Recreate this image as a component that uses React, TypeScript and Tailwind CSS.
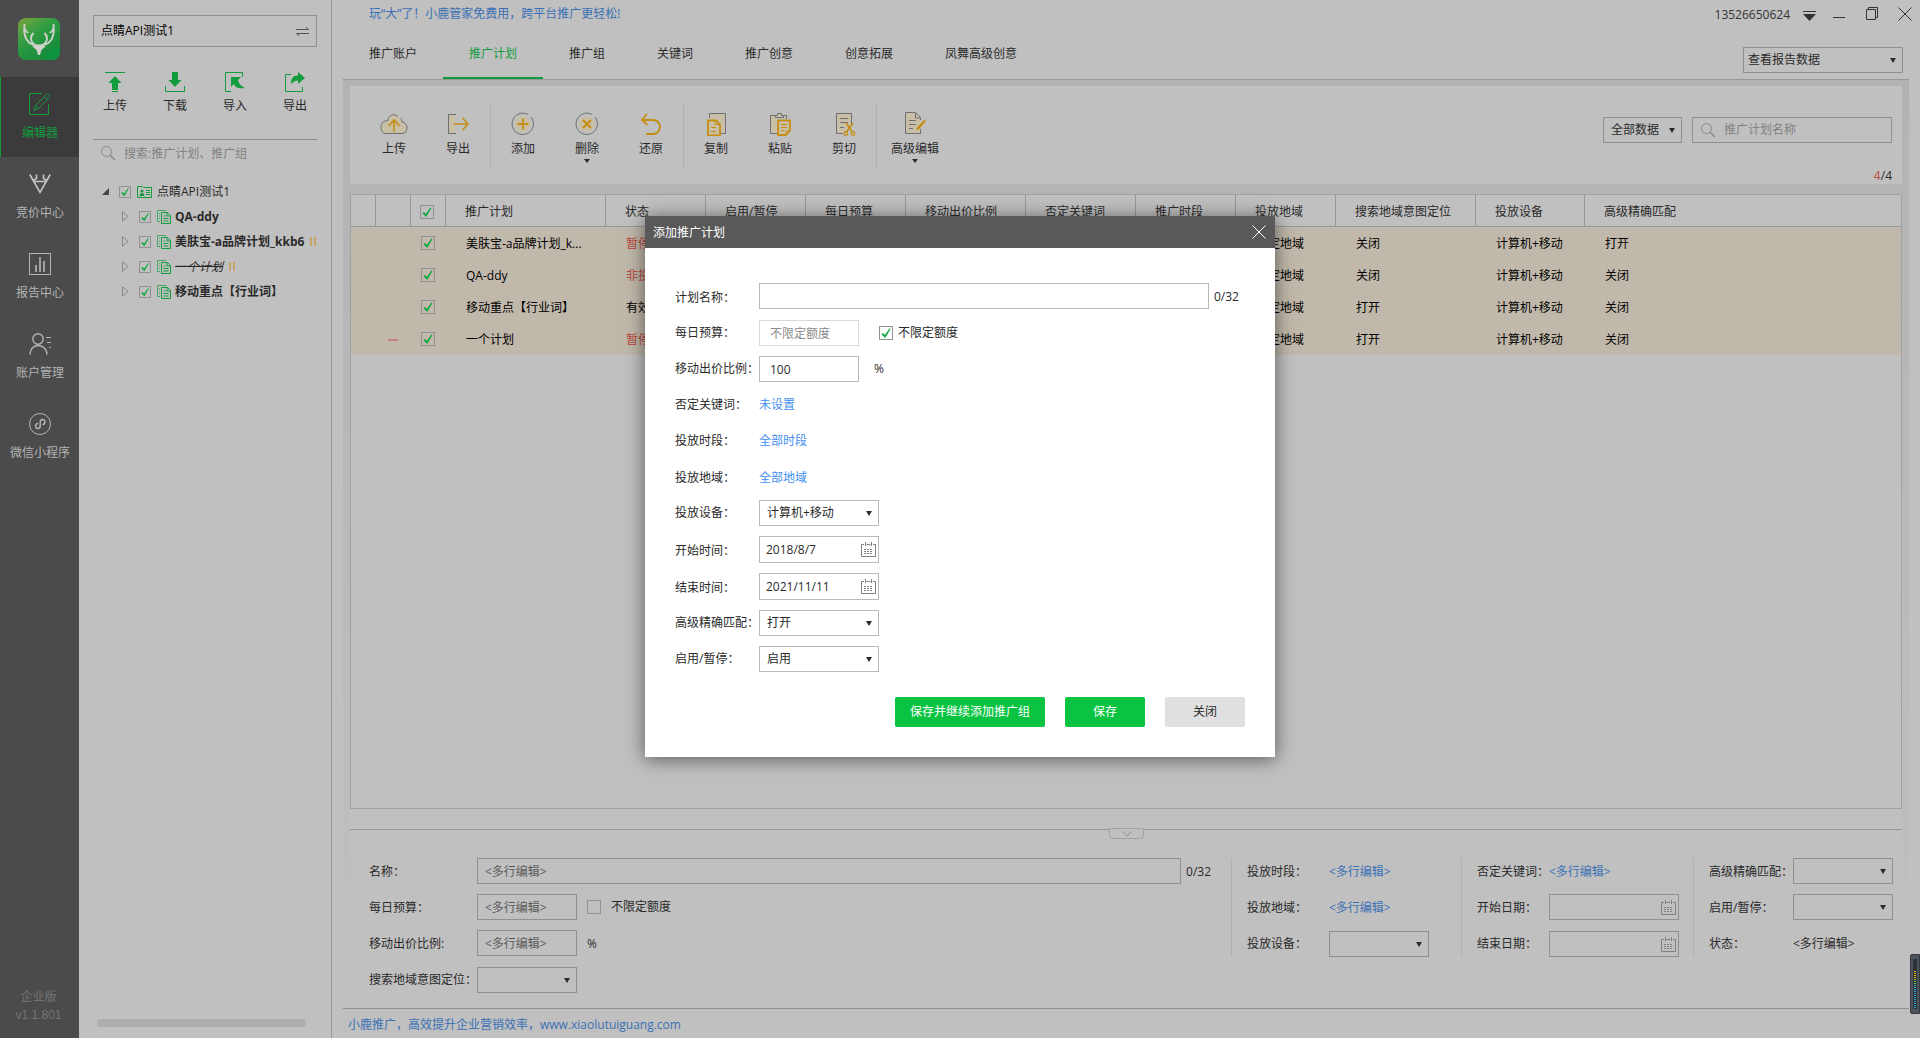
import { useState } from "react";
import type { ReactNode } from "react";

type Campaign = {
  name: string;
  status: string;
  paused?: boolean;
  removed?: boolean;
  geo: string;
  match: string;
};

const campaigns: Campaign[] = [
  { name: "美肤宝-a品牌计划_k...", status: "暂停", paused: true, geo: "关闭", match: "打开" },
  { name: "QA-ddy", status: "非投放", paused: true, geo: "关闭", match: "关闭" },
  { name: "移动重点【行业词】", status: "有效", geo: "打开", match: "关闭" },
  { name: "一个计划", status: "暂停", paused: true, removed: true, geo: "打开", match: "关闭" },
];

const tabs = ["推广账户", "推广计划", "推广组", "关键词", "推广创意", "创意拓展", "凤舞高级创意"];

const headers = [
  "推广计划",
  "状态",
  "启用/暂停",
  "每日预算",
  "移动出价比例",
  "否定关键词",
  "推广时段",
  "投放地域",
  "搜索地域意图定位",
  "投放设备",
  "高级精确匹配",
];

const MULTI = "<多行编辑>";

/* ---------- icons ---------- */

function Svg({ w, h, className, children }: { w: number; h: number; className?: string; children: ReactNode }) {
  return (
    <svg
      width={w}
      height={h}
      viewBox={`0 0 ${w} ${h}`}
      fill="none"
      stroke="currentColor"
      className={className}
      aria-hidden="true"
    >
      {children}
    </svg>
  );
}

function Logo() {
  return (
    <Svg w={42} h={42} className="text-[#d2d2cc]">
      <defs>
        <linearGradient id="logo" x1="0" y1="0" x2="0.7" y2="1">
          <stop offset="0" stopColor="#7aa53c" />
          <stop offset="0.45" stopColor="#2f9c43" />
          <stop offset="1" stopColor="#12893a" />
        </linearGradient>
      </defs>
      <rect width="42" height="42" rx="8" fill="url(#logo)" stroke="none" />
      <path d="M42 28C34 30 28 36 26 42h8a8 8 0 0 0 8-8z" fill="#0f9440" stroke="none" />
      <path d="M6.500 6c-1 8 0 15 5 19 3 2 6 2.500 9.500 2.500s6.500-.5 9.500-2.500c5-4 6-11 5-19" strokeWidth="1.800" />
      <path d="M10.500 14.500c-2 0-3-1.500-3.500-4M31.500 14.500c2 0 3-1.500 3.500-4" strokeWidth="1.500" />
      <path d="M15.500 15c-4 4-3 9 1 11M26.500 15c4 4 3 9-1 11" strokeWidth="1.800" />
      <path d="M14 28h14l-4.500 4-1.500 5h-2l-1.500-5z" fill="currentColor" stroke="none" />
    </Svg>
  );
}

function EditIcon() {
  return (
    <Svg w={22} h={22}>
      <path d="M13 .5H.5v21h19V11" />
      <path d="M5 17.500l1.500-5L17.500 1.500c1-1 2-.8 2.800 0s1 1.800 0 2.800L9.500 15.500z M15.500 3.500l3 3 M6.500 12.500l3 3" />
    </Svg>
  );
}

function BidIcon() {
  return (
    <Svg w={22} h={22} className="text-[#c4c4c4]">
      <path d="M.8 1.500l10.200 18L21.200 1.500M5 8.500h12M7.500 1.500v4l-3.500 2M14.500 1.500v4l3.500 2" strokeWidth="1.600" />
    </Svg>
  );
}

function ReportIcon() {
  return (
    <Svg w={22} h={22}>
      <path d="M.5.5h21v21H.5z" />
      <path d="M7 12v7M11 4v15M15 8v11" strokeWidth="1.600" />
    </Svg>
  );
}

function AccountIcon() {
  return (
    <Svg w={22} h={22}>
      <circle cx="9" cy="6" r="5.200" strokeWidth="1.400" />
      <path d="M1 21.500c0-6 4-9 8-9s9 3 9 9" strokeWidth="1.400" />
      <path d="M17 4.500h5M18 9.500h4M20 14.500h2" />
    </Svg>
  );
}

function MiniAppIcon() {
  return (
    <Svg w={22} h={22}>
      <circle cx="11" cy="11" r="10.500" />
      <path
        d="M8.500 10.500c-2.500.5-2.500 5 .3 5 1.500 0 2.400-1 2.400-2.500V9c0-1.500 1-2.500 2.500-2.500 2.800 0 3 4.200.3 5"
        strokeWidth="1.500"
        strokeLinecap="round"
      />
    </Svg>
  );
}

const treeActions = [
  {
    label: "上传",
    icon: (
      <Svg w={20} h={20}>
        <path d="M0 .5h20M7 19.500h6" />
        <path d="M10 4l6.500 7H13v7H7v-7H3.500z" fill="currentColor" stroke="none" />
      </Svg>
    ),
  },
  {
    label: "下载",
    icon: (
      <Svg w={20} h={20}>
        <path d="M.5 14v5.500h19V14" />
        <path d="M10 15L3.500 8H7V0h6v8h3.500z" fill="currentColor" stroke="none" />
      </Svg>
    ),
  },
  {
    label: "导入",
    icon: (
      <Svg w={20} h={20}>
        <path d="M17.500 5V.5H.5v19H6" />
        <path d="M6 5h10l-3 3c1 4 3 6 7 8-7 1-10-1-11-4l-3 3z" fill="currentColor" stroke="none" />
      </Svg>
    ),
  },
  {
    label: "导出",
    icon: (
      <Svg w={20} h={20}>
        <path d="M6 2.500H.5v17h17V15" />
        <path d="M13 0l7 6-7 6V8.500c-3 0-5 1-7 4 0-6 2-9 7-9z" fill="currentColor" stroke="none" />
      </Svg>
    ),
  },
];

const GOLD = "#c48e12";
const CREAM = "#c8bfa6";

const uploadIcon = (
  <Svg w={28} h={24}>
    <path
      d="M18 4.500C13 .5 8 4 8 8.500 4 8.500 1 11 1 15s2 6.500 5 6.500h16c3 0 5-2 5-5.500 0-3.500-2-5.500-5-6 0-2-.5-3-1.500-4"
      fill={CREAM}
    />
    <path d="M14 20V8M8.500 14L14 8l5.500 6" stroke={GOLD} strokeWidth="1.600" />
  </Svg>
);
const exportIcon = (
  <Svg w={24} h={24}>
    <path d="M3 3h6v18H3z" fill={CREAM} stroke="none" />
    <path d="M10 2.500H2.500v19H10" />
    <path d="M8 12h14M16.500 6l5.500 6-5.500 6" stroke={GOLD} strokeWidth="1.600" />
  </Svg>
);
const addIcon = (
  <Svg w={24} h={24}>
    <circle cx="12" cy="12" r="8" fill={CREAM} stroke="none" />
    <path d="M20 5a10.700 10.700 0 1 1-3-2.500" />
    <path d="M12 6.500v11M6.500 12h11" stroke={GOLD} strokeWidth="1.800" />
  </Svg>
);
const deleteIcon = (
  <Svg w={24} h={24}>
    <circle cx="12" cy="12" r="8" fill={CREAM} stroke="none" />
    <path d="M20 5a10.700 10.700 0 1 1-3-2.500" />
    <path d="M8 8l8 8M16 8l-8 8" stroke={GOLD} strokeWidth="2.200" />
  </Svg>
);
const undoIcon = (
  <Svg w={24} h={24}>
    <path d="M8 2L3 8l5.500 5M3 8h11c4 0 7 3 7 7s-3 7-7 7H7" stroke={GOLD} strokeWidth="1.800" />
  </Svg>
);
const copyIcon = (
  <Svg w={24} h={24}>
    <path d="M5.500 6V1.500h16v20H16" fill={CREAM} />
    <path d="M4 8.500h8l4 4v11H4z" fill={CREAM} stroke={GOLD} strokeWidth="1.800" />
    <path d="M11 8.500v4h4M7 15.500h5M7 19.500h5" stroke={GOLD} />
  </Svg>
);
const pasteIcon = (
  <Svg w={24} h={24}>
    <path d="M8 3.500H2.500v18H9M14 3.500h4.500V7M7.500 5.500V3.500h2v-2h4v2h2v2z" fill={CREAM} />
    <path d="M10 8.500h12v10l-4 4.500h-8z" fill={CREAM} stroke={GOLD} strokeWidth="1.800" />
    <path d="M13 12.500h6M13 15.500h6M13 18.500h3M18 23v-4h4" stroke={GOLD} />
  </Svg>
);
const cutIcon = (
  <Svg w={24} h={24}>
    <path d="M11 21.500H4.500v-20h15V12" fill={CREAM} />
    <path d="M8 6.500h8M8 10.500h8M8 15.500h4" />
    <path d="M14 11l6.500 9M21 11l-6.500 9" stroke={GOLD} strokeWidth="1.600" />
    <circle cx="14" cy="21.500" r="1.800" stroke={GOLD} strokeWidth="1.300" />
    <circle cx="21" cy="21.500" r="1.800" stroke={GOLD} strokeWidth="1.300" />
  </Svg>
);
const advancedIcon = (
  <Svg w={24} h={24}>
    <path d="M17.500 17v4.500H2.500v-21h10l5 5V8" fill={CREAM} />
    <path d="M12.500 1v5h5M6 8.500h7M6 12.500h7M6 16.500h4" />
    <path d="M14 17.500l8-9" stroke={GOLD} strokeWidth="2.500" />
  </Svg>
);

const toolGroups = [
  [
    { label: "上传", icon: uploadIcon },
    { label: "导出", icon: exportIcon },
  ],
  [
    { label: "添加", icon: addIcon },
    { label: "删除", icon: deleteIcon, menu: true },
    { label: "还原", icon: undoIcon },
  ],
  [
    { label: "复制", icon: copyIcon },
    { label: "粘贴", icon: pasteIcon },
    { label: "剪切", icon: cutIcon },
  ],
  [{ label: "高级编辑", icon: advancedIcon, menu: true }],
];

function SearchIcon() {
  return (
    <Svg w={15} h={15} className="shrink-0 text-[#8a8a8a]">
      <circle cx="5.500" cy="5.500" r="5" />
      <path d="M9 9l5 5" strokeWidth="1.500" />
    </Svg>
  );
}

function CalendarIcon() {
  return (
    <Svg w={15} h={15} className="text-[#808080]">
      <path d="M3 2.500H.5v12h14v-12H12M5.500 2.500h4M4.500 0v4M10.500 0v4" />
      <path d="M3 7.500h9M3 9.500h9M3 11.500h9" strokeDasharray="2 1" />
    </Svg>
  );
}

function CloseIcon() {
  return (
    <Svg w={14} h={14}>
      <path d="M.5.5l13 13M13.500.5l-13 13" />
    </Svg>
  );
}

function CampaignIcon() {
  return (
    <Svg w={14} h={14} className="shrink-0 text-[#129c3e]">
      <path d="M9 .5H.5v11H3" opacity=".7" />
      <path d="M2 3.500h1M2 6h1M2 8.500h1" opacity=".7" />
      <path d="M4.500 2.500h6l3 3v8h-9zM10 2.500V6h3M6.500 6h2M6.500 8.500h5M6.500 11h5" />
    </Svg>
  );
}

function AccountTreeIcon() {
  return (
    <Svg w={15} h={12} className="shrink-0 text-[#129c3e]">
      <path d="M.5 11.500V.5h5l1 1h8v10z" />
      <circle cx="5" cy="5" r="1.500" fill="currentColor" stroke="none" />
      <path d="M2.500 10c0-4 5-4 5 0z" fill="currentColor" stroke="none" />
      <path d="M9 4.500h4M9 6.500h4M9 8.500h4" />
    </Svg>
  );
}

function PauseIcon() {
  return (
    <Svg w={6} h={9} className="shrink-0 text-[#c89b50]">
      <path d="M1 0v9M5 0v9" strokeWidth="1.500" />
    </Svg>
  );
}

/* ---------- form controls ---------- */

function Check({ id, label, on = true, size = "size-[14px]" }: { id?: string; label?: string; on?: boolean; size?: string }) {
  return (
    <span className={`relative inline-flex shrink-0 ${size}`}>
      <input
        id={id}
        type="checkbox"
        aria-label={label}
        defaultChecked={on}
        className="peer size-full appearance-none border border-[#929292]"
      />
      <svg
        viewBox="0 0 14 14"
        fill="none"
        aria-hidden="true"
        className="pointer-events-none absolute inset-0 hidden peer-checked:block"
      >
        <path d="M2.500 8.200L4 7l1.800 2L10.500 2.500l1 .5-5.300 9z" fill="#0aa83c" />
      </svg>
    </span>
  );
}

function Select({
  id,
  label,
  options,
  className,
  pad = "pl-[7px]",
}: {
  id?: string;
  label?: string;
  options: string[];
  className: string;
  pad?: string;
}) {
  return (
    <span className={`relative inline-flex h-[26px] ${className}`}>
      <select id={id} aria-label={label} className={`size-full appearance-none border border-inherit bg-transparent ${pad}`}>
        {options.map((o) => (
          <option key={o}>{o}</option>
        ))}
      </select>
      <svg width="6" height="5" aria-hidden="true" className="pointer-events-none absolute right-[7px] top-[11px]">
        <path d="M0 0h6L3 5z" fill="#2a2a2a" />
      </svg>
    </span>
  );
}

function DateInput({ id, value, className }: { id: string; value: string; className: string }) {
  return (
    <span className={`relative inline-flex ${className}`}>
      <input id={id} type="text" defaultValue={value} className="size-full border border-inherit bg-transparent pl-[6px]" />
      <button type="button" aria-label="选择日期" className="absolute right-[3px] top-[6px]">
        <CalendarIcon />
      </button>
    </span>
  );
}

/* ---------- layout parts ---------- */

function Sidebar() {
  const items = [
    { label: "编辑器", icon: <EditIcon />, active: true },
    { label: "竞价中心", icon: <BidIcon /> },
    { label: "报告中心", icon: <ReportIcon /> },
    { label: "账户管理", icon: <AccountIcon /> },
    { label: "微信小程序", icon: <MiniAppIcon /> },
  ];
  return (
    <nav className="flex w-[79px] shrink-0 flex-col bg-[#4b4b4b] text-[#b4b4b4]">
      <div className="flex h-[77px] items-center justify-center pr-px">
        <Logo />
      </div>
      {items.map((item) => (
        <button
          key={item.label}
          type="button"
          className={`flex h-20 flex-col items-center gap-[9px] border-l pt-4 ${
            item.active ? "border-[#129c3e] bg-[#3b3b3b] text-[#129c3e]" : "border-transparent"
          }`}
        >
          {item.icon}
          <span>{item.label}</span>
        </button>
      ))}
      <div className="mt-auto pb-[14px] pr-[2px] text-center text-[#757575]">
        <p>企业版</p>
        <p className="font-['Liberation_Sans']">v1.1.801</p>
      </div>
    </nav>
  );
}

function TreePanel() {
  const nodes = [
    { name: "QA-ddy" },
    { name: "美肤宝-a品牌计划_kkb6", paused: true },
    { name: "一个计划", paused: true, removed: true },
    { name: "移动重点【行业词】" },
  ];
  return (
    <aside className="flex w-[253px] shrink-0 flex-col border-r border-[#989898] pl-[14px] pr-[14px]">
      <button type="button" className="mt-[15px] flex h-8 items-center justify-between border border-[#909090] px-[7px] text-black">
        点睛API测试1
        <Svg w={13} h={9} className="text-[#555]">
          <path d="M0 2.500h12.500L9.500 0M13 6.500H.5l3 2.500" />
        </Svg>
      </button>
      <div className="-mx-2 mt-[25px] grid grid-cols-4">
        {treeActions.map((a) => (
          <button key={a.label} type="button" className="flex flex-col items-center gap-[5px] text-[#129c3e]">
            {a.icon}
            <span className="text-[#2a2a2a]">{a.label}</span>
          </button>
        ))}
      </div>
      <div className="mt-6 flex h-[28px] items-center gap-2 border-t border-[#909090] pl-2">
        <SearchIcon />
        <input
          type="text"
          aria-label="搜索"
          placeholder="搜索:推广计划、推广组"
          className="min-w-0 flex-1 bg-transparent placeholder:text-[#828282]"
        />
      </div>
      <ul className="mt-3 flex-1 overflow-hidden">
        <li className="flex h-[25px] items-center pl-[9px]">
          <svg width="7" height="7" aria-hidden="true">
            <path d="M7 0v7H0z" fill="#444" />
          </svg>
          <span className="ml-[10px] flex items-center gap-[6px]">
            <Check label="点睛API测试1" size="size-3" />
            <AccountTreeIcon />
            <span className="-ml-px text-[#2a2a2a]">点睛API测试1</span>
          </span>
        </li>
        {nodes.map((n) => (
          <li key={n.name} className="flex h-[25px] items-center pl-[29px]">
            <Svg w={7} h={11} className="shrink-0 text-[#888]">
              <path d="M.5.8v9.400l5.500-4.700z" />
            </Svg>
            <span className="ml-[10px] flex items-center gap-[6px]">
              <Check label={n.name} size="size-3" />
              <CampaignIcon />
              <span
                className={`-ml-[2px] whitespace-nowrap text-[#2a2a2a] ${n.removed ? "italic line-through" : "font-bold"}`}
              >
                {n.name}
              </span>
              {n.paused && <PauseIcon />}
            </span>
          </li>
        ))}
      </ul>
      <div className="mx-1 mb-[11px] h-2 w-[209px] rounded-full bg-[#aeaeae]" />
    </aside>
  );
}

function TopBar() {
  return (
    <header className="flex h-[27px] items-center justify-between pl-[37px] pr-2">
      <a href="#promo" className="text-[#3a70b5]">
        玩“大”了！小鹿管家免费用，跨平台推广更轻松!
      </a>
      <div className="flex items-center text-[#333]">
        <span className="pt-[2px]">13526650624</span>
        <button type="button" aria-label="菜单" className="ml-[13px] pt-1">
          <Svg w={13} h={10}>
            <path d="M0 .5h13" />
            <path d="M0 3h13l-6.500 7z" fill="currentColor" stroke="none" />
          </Svg>
        </button>
        <button type="button" aria-label="最小化" className="ml-[17px] pt-1">
          <Svg w={12} h={10}>
            <path d="M0 6.500h12" />
          </Svg>
        </button>
        <button type="button" aria-label="还原窗口" className="ml-[21px]">
          <Svg w={12} h={13}>
            <path d="M.5 2.500h9v10h-9zM2.500 2V.5h9v10H10" />
          </Svg>
        </button>
        <button type="button" aria-label="关闭窗口" className="ml-5">
          <CloseIcon />
        </button>
      </div>
    </header>
  );
}

function Tabs() {
  const [active, setActive] = useState("推广计划");
  return (
    <div className="mx-[11px] flex h-[53px] justify-between border-b border-[#989898]">
      <div className="flex" role="tablist">
        {tabs.map((t) => (
          <button
            key={t}
            type="button"
            role="tab"
            aria-selected={t === active}
            onClick={() => setActive(t)}
            className={`border-b-2 px-[26px] pt-1 ${
              t === active ? "border-[#129c3e] text-[#129c3e]" : "border-transparent text-[#2a2a2a]"
            }`}
          >
            {t}
          </button>
        ))}
      </div>
      <div className="mr-[6px] flex items-end pb-[6px]">
        <Select label="查看报告数据" options={["查看报告数据"]} className="w-40 border-[#909090]" pad="pl-1" />
      </div>
    </div>
  );
}

function Toolbar() {
  return (
    <div className="flex h-[98px] justify-between bg-[#c0c0c0] pl-3 pr-[10px]">
      <div className="flex text-[#6d7072]">
        {toolGroups.map((group, i) => (
          <div key={i} className="flex">
            {i > 0 && <div className="mt-[17px] h-16 w-px bg-[#b0b0b0]" />}
            {group.map((t) => (
              <button
                key={t.label}
                type="button"
                className={`flex flex-col items-center pt-[26px] ${t.label.length > 2 ? "w-[76px]" : "w-16"}`}
              >
                {t.icon}
                <span className="mt-1 text-[#2a2a2a]">{t.label}</span>
                {"menu" in t && (
                  <svg width="6" height="4" aria-hidden="true" className="mt-px">
                    <path d="M0 0h6L3 4z" fill="#2a2a2a" />
                  </svg>
                )}
              </button>
            ))}
          </div>
        ))}
      </div>
      <div className="flex flex-col items-end justify-between pt-[31px]">
        <div className="flex gap-[10px]">
          <Select label="数据范围" options={["全部数据"]} className="w-[79px] border-[#909090]" />
          <div className="flex h-[26px] w-[200px] items-center gap-2 border border-[#909090] pl-2">
            <SearchIcon />
            <input
              type="text"
              aria-label="推广计划名称"
              placeholder="推广计划名称"
              className="min-w-0 flex-1 bg-transparent placeholder:text-[#828282]"
            />
          </div>
        </div>
        <p className="leading-4">
          <span className="text-[#bb4a3e]">4</span>/4
        </p>
      </div>
    </div>
  );
}

function CampaignTable() {
  return (
    <div className="mt-[10px] flex-1 border border-[#a2a2a2] bg-[#c0c0c0]">
      <table className="w-full table-fixed border-separate border-spacing-0 text-left">
        <colgroup>
          <col className="w-[25px]" />
          <col className="w-[35px]" />
          <col className="w-[35px]" />
          <col className="w-40" />
          <col className="w-[100px]" />
          <col className="w-[100px]" />
          <col className="w-[100px]" />
          <col className="w-[120px]" />
          <col className="w-[110px]" />
          <col className="w-[100px]" />
          <col className="w-[100px]" />
          <col className="w-[140px]" />
          <col className="w-[109px]" />
          <col />
        </colgroup>
        <thead>
          <tr className="h-8 text-[#2a2a2a] *:border-b *:border-[#989898] *:pt-[2px]">
            <th className="border-r" />
            <th className="border-r" />
            <th className="border-r">
              <span className="flex justify-center pr-[3px]">
                <Check label="全选" />
              </span>
            </th>
            {headers.map((h) => (
              <th key={h} className="border-r pl-[19px] font-normal whitespace-nowrap last:border-r-0">
                {h}
              </th>
            ))}
          </tr>
        </thead>
        <tbody>
          {campaigns.map((c) => (
            <tr key={c.name} className="h-8 bg-[#c0b8aa] whitespace-nowrap text-black *:pl-5 *:pt-[2px]">
              <td className="!pl-0" />
              <td className="!pl-3">{c.removed && <div className="h-[2px] w-[10px] bg-[#c67f7b]" />}</td>
              <td className="!pl-0 !pt-0">
                <span className="flex justify-center pr-px">
                  <Check label={c.name} />
                </span>
              </td>
              <td>{c.name}</td>
              <td className={c.paused ? "text-[#bb4a3e]" : ""}>{c.status}</td>
              <td />
              <td />
              <td />
              <td />
              <td />
              <td>指定地域</td>
              <td>{c.geo}</td>
              <td>计算机+移动</td>
              <td>{c.match}</td>
            </tr>
          ))}
        </tbody>
      </table>
    </div>
  );
}

function BatchEditor() {
  const box = "border border-[#909090] bg-transparent px-[7px] h-[26px] placeholder:text-[#5a5a5a]";
  const text = "pt-[2px]";
  return (
    <section className="flex h-[199px] flex-col bg-[#c0c0c0] pt-5">
      <div className="flex h-[29px] items-start border-t border-[#989898]">
        <button
          type="button"
          aria-label="收起"
          className="ml-[759px] -mt-[2px] flex h-[11px] w-[35px] items-center justify-center rounded-b-sm border border-[#a2a2a2] bg-[#c0c0c0] text-[#909090]"
        >
          <Svg w={12} h={6}>
            <path d="M1.500.5L6 5l4.500-4.500" />
          </Svg>
        </button>
      </div>
      <div className="flex pl-[19px] pr-[9px]">
        <div className="grid min-w-0 flex-1 auto-rows-[26px] grid-cols-[108px_1fr] items-center gap-y-[10px]">
          <label htmlFor="b-name" className={text}>名称：</label>
          <div className="flex items-center gap-[5px] pr-5">
            <input id="b-name" placeholder={MULTI} className={`min-w-0 flex-1 ${box}`} />
            <span className={text}>0/32</span>
          </div>
          <label htmlFor="b-budget" className={text}>每日预算：</label>
          <div className="flex items-center gap-[10px]">
            <input id="b-budget" placeholder={MULTI} className={`w-[100px] ${box}`} />
            <Check id="b-unlimited" on={false} />
            <label htmlFor="b-unlimited">不限定额度</label>
          </div>
          <label htmlFor="b-ratio" className={text}>移动出价比例:</label>
          <div className="flex items-center gap-[10px]">
            <input id="b-ratio" placeholder={MULTI} className={`w-[100px] ${box}`} />
            <span className={text}>%</span>
          </div>
          <label htmlFor="b-geo" className={text}>搜索地域意图定位：</label>
          <Select id="b-geo" options={[""]} className="mt-px w-[100px] border-[#909090]" />
        </div>
        <div className="grid h-[98px] w-[230px] auto-rows-[26px] grid-cols-[82px_1fr] items-center gap-y-[10px] border-l border-[#b0b0b0] pl-[15px]">
          <span className={text}>投放时段：</span>
          <a href="#time" className="pt-[2px] text-[#3a70b5]">{MULTI}</a>
          <span className={text}>投放地域：</span>
          <a href="#region" className="pt-[2px] text-[#3a70b5]">{MULTI}</a>
          <label htmlFor="b-device" className={text}>投放设备：</label>
          <Select id="b-device" options={[""]} className="mt-px w-[100px] border-[#909090]" />
        </div>
        <div className="grid h-[98px] w-[232px] auto-rows-[26px] grid-cols-[72px_1fr] items-center gap-y-[10px] border-l border-[#b0b0b0] pl-[15px]">
          <span className={text}>否定关键词：</span>
          <a href="#negative" className="pt-[2px] text-[#3a70b5]">{MULTI}</a>
          <label htmlFor="b-start" className={text}>开始日期：</label>
          <DateInput id="b-start" value="" className="h-[26px] w-[130px] border-[#909090]" />
          <label htmlFor="b-end" className={text}>结束日期：</label>
          <DateInput id="b-end" value="" className="mt-px h-[26px] w-[130px] border-[#909090]" />
        </div>
        <div className="grid h-[98px] w-[200px] auto-rows-[26px] grid-cols-[84px_1fr] items-center gap-y-[10px] border-l border-[#b0b0b0] pl-[15px]">
          <label htmlFor="b-match" className={text}>高级精确匹配：</label>
          <Select id="b-match" options={[""]} className="w-[100px] border-[#909090]" />
          <label htmlFor="b-enable" className={text}>启用/暂停：</label>
          <Select id="b-enable" options={[""]} className="w-[100px] border-[#909090]" />
          <span className={text}>状态：</span>
          <span className={text}>{MULTI}</span>
        </div>
      </div>
    </section>
  );
}

function AddCampaignDialog() {
  const box = "border border-[#b9b9b9] bg-white h-[26px] px-[10px]";
  const text = "pt-[2px]";
  const link = "pt-[2px] text-[#3f8fee]";
  return (
    <div className="absolute inset-x-0 top-[216px] flex justify-center">
      <form
        role="dialog"
        aria-labelledby="dialog-title"
        onSubmit={(e) => e.preventDefault()}
        className="w-[630px] bg-white text-[#2a2a2a] shadow-[0_2px_18px_rgba(0,0,0,0.55)]"
      >
        <div className="flex h-8 items-center justify-between bg-[#595959] pl-2 pr-[9px] text-white">
          <h2 id="dialog-title" className={text}>添加推广计划</h2>
          <button type="button" aria-label="关闭对话框">
            <CloseIcon />
          </button>
        </div>
        <div className="grid auto-rows-[minmax(26px,auto)] grid-cols-[84px_1fr] items-center gap-y-[10px] px-[30px] pt-[35px]">
          <label htmlFor="name" className={text}>计划名称：</label>
          <div className="flex h-[27px] items-start gap-[5px]">
            <input id="name" className={`w-[450px] ${box}`} />
            <span className="pt-[5px]">0/32</span>
          </div>
          <label htmlFor="budget">每日预算：</label>
          <div className="flex items-center">
            <input
              id="budget"
              disabled
              placeholder="不限定额度"
              className="h-[26px] w-[100px] border border-[#d9d9d9] px-[10px] placeholder:text-[#8c8c8c]"
            />
            <span className="ml-5 flex items-center gap-[5px]">
              <Check id="unlimited" />
              <label htmlFor="unlimited">不限定额度</label>
            </span>
          </div>
          <label htmlFor="ratio">移动出价比例：</label>
          <div className="flex items-center gap-[15px]">
            <input id="ratio" defaultValue="100" className={`w-[100px] ${box}`} />
            <span>%</span>
          </div>
          <span>否定关键词：</span>
          <a href="#negative" className="text-[#3f8fee]">未设置</a>
          <span>投放时段：</span>
          <a href="#time" className="text-[#3f8fee]">全部时段</a>
          <span className={text}>投放地域：</span>
          <a href="#region" className={link}>全部地域</a>
          <label htmlFor="device">投放设备：</label>
          <Select id="device" options={["计算机+移动", "计算机", "移动"]} className="w-[120px] border-[#b9b9b9]" />
          <label htmlFor="start" className={text}>开始时间：</label>
          <DateInput id="start" value="2018/8/7" className="h-[27px] w-[120px] border-[#b9b9b9]" />
          <label htmlFor="end" className={text}>结束时间：</label>
          <DateInput id="end" value="2021/11/11" className="h-[27px] w-[120px] border-[#b9b9b9]" />
          <label htmlFor="match">高级精确匹配：</label>
          <Select id="match" options={["打开", "关闭"]} className="w-[120px] border-[#b9b9b9]" />
          <label htmlFor="enable">启用/暂停：</label>
          <Select id="enable" options={["启用", "暂停"]} className="w-[120px] border-[#b9b9b9]" />
        </div>
        <div className="flex justify-end gap-5 px-[30px] pb-[30px] pt-[25px]">
          <button type="submit" className="h-[30px] w-[150px] rounded-xs bg-[#09c341] text-white">
            保存并继续添加推广组
          </button>
          <button type="submit" className="h-[30px] w-20 rounded-xs bg-[#09c341] text-white">
            保存
          </button>
          <button type="button" className="h-[30px] w-20 rounded-xs bg-[#e0e0e0]">
            关闭
          </button>
        </div>
      </form>
    </div>
  );
}

// CPU meter docked at the right edge of the window
function Meter() {
  return (
    <div className="absolute bottom-6 right-0 flex h-[60px] w-[10px] justify-center rounded-l-xs border border-[#35393d] bg-[#4c555e] py-1">
      <div className="flex w-1 flex-col justify-end bg-[#2d3237] px-px">
        <div className="h-full bg-[repeating-linear-gradient(to_bottom,transparent_0_1px,#2d3237_1px_2px),linear-gradient(to_bottom,#2d3237_25%,#d8c020_25%_38%,#5cc860_48%,#2aa8d8_58%)]" />
      </div>
    </div>
  );
}

export default function App() {
  return (
    <div className="relative flex min-h-screen bg-[#c0c0c0] font-['Open_Sans','Noto_Sans_CJK_SC',sans-serif] text-xs leading-[18px] text-[#2a2a2a]">
      <Sidebar />
      <TreePanel />
      <main className="flex min-w-0 flex-1 flex-col">
        <TopBar />
        <Tabs />
        <div className="mx-[11px] flex flex-1 flex-col border-b border-[#909090] bg-linear-to-b from-[#b3b3b3] to-[#c0c0c0] px-[7px] pt-[6px]">
          <Toolbar />
          <CampaignTable />
          <BatchEditor />
        </div>
        <footer className="flex h-[29px] items-center pl-4 pt-[2px]">
          <a href="#site" className="text-[#3a70b5]">
            小鹿推广，高效提升企业营销效率，www.xiaolutuiguang.com
          </a>
        </footer>
      </main>
      <AddCampaignDialog />
      <Meter />
    </div>
  );
}
